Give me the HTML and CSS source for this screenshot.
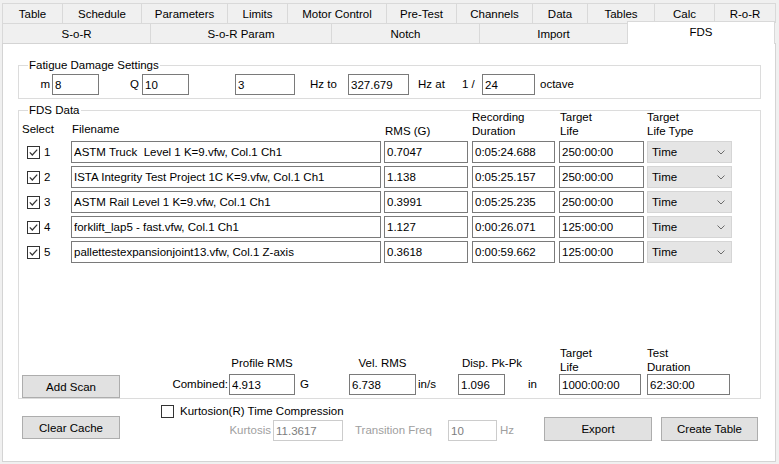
FILE: index.html
```html
<!DOCTYPE html>
<html>
<head>
<meta charset="utf-8">
<title>FDS</title>
<link rel="stylesheet" href="styles.css">
</head>
<body>
<div class="window">
  <div class="tabs">
    <div class="tab-row">
      <div class="tab first t-table">Table</div>
      <div class="tab t-schedule">Schedule</div>
      <div class="tab t-params">Parameters</div>
      <div class="tab t-limits">Limits</div>
      <div class="tab t-motor">Motor Control</div>
      <div class="tab t-pretest">Pre-Test</div>
      <div class="tab t-channels">Channels</div>
      <div class="tab t-data">Data</div>
      <div class="tab t-tables">Tables</div>
      <div class="tab t-calc">Calc</div>
      <div class="tab t-ror">R-o-R</div>
    </div>
    <div class="tab-row">
      <div class="tab first t-sor">S-o-R</div>
      <div class="tab t-sorparam">S-o-R Param</div>
      <div class="tab t-notch">Notch</div>
      <div class="tab t-import">Import</div>
      <div class="tab t-fds active">FDS</div>
    </div>
  </div>

  <div class="panel">
    <div class="group group-settings">
      <span class="group-title">Fatigue Damage Settings</span>
      <div class="settings-row">
        <span class="lbl lbl-m">m</span>
        <input class="input w-m" type="text" value="8" readonly>
        <span class="lbl lbl-q">Q</span>
        <input class="input w-q" type="text" value="10" readonly>
        <input class="input w-from" type="text" value="3" readonly>
        <span class="lbl lbl-hzto">Hz to</span>
        <input class="input w-to" type="text" value="327.679" readonly>
        <span class="lbl lbl-hzat">Hz at</span>
        <span class="lbl lbl-frac">1 /</span>
        <input class="input w-oct" type="text" value="24" readonly>
        <span class="lbl lbl-octave">octave</span>
      </div>
    </div>

    <div class="group group-data">
      <span class="group-title">FDS Data</span>
      <div class="data-head">
        <div class="col c-select hd-select">Select</div>
        <div class="col c-file hd-file">Filename</div>
        <div class="col c-rms hd-rms">RMS (G)</div>
        <div class="col c-rec hd-rec">Recording<br>Duration</div>
        <div class="col c-life hd-life">Target<br>Life</div>
        <div class="col c-type hd-type">Target<br>Life Type</div>
      </div>

      <div class="data-rows">
        <div class="data-row">
          <div class="col c-select sel">
            <svg class="check" width="13" height="13" viewBox="0 0 13 13"><rect x="0.5" y="0.5" width="12" height="12" fill="#fff" stroke="#333"/><path d="M2.8 6.4 L5.3 9 L10.2 3.6" fill="none" stroke="#333" stroke-width="1.2"/></svg>
            <span class="num">1</span>
          </div>
          <input class="input col c-file" type="text" value="ASTM Truck  Level 1 K=9.vfw, Col.1 Ch1" readonly>
          <input class="input col c-rms" type="text" value="0.7047" readonly>
          <input class="input col c-rec" type="text" value="0:05:24.688" readonly>
          <input class="input col c-life" type="text" value="250:00:00" readonly>
          <div class="combo col c-type"><span>Time</span><svg width="8" height="5" viewBox="0 0 8 5"><path d="M0.5 0.5 L4 4 L7.5 0.5" fill="none" stroke="#6b6b6b"/></svg></div>
        </div>
        <div class="data-row">
          <div class="col c-select sel">
            <svg class="check" width="13" height="13" viewBox="0 0 13 13"><rect x="0.5" y="0.5" width="12" height="12" fill="#fff" stroke="#333"/><path d="M2.8 6.4 L5.3 9 L10.2 3.6" fill="none" stroke="#333" stroke-width="1.2"/></svg>
            <span class="num">2</span>
          </div>
          <input class="input col c-file" type="text" value="ISTA Integrity Test Project 1C K=9.vfw, Col.1 Ch1" readonly>
          <input class="input col c-rms" type="text" value="1.138" readonly>
          <input class="input col c-rec" type="text" value="0:05:25.157" readonly>
          <input class="input col c-life" type="text" value="250:00:00" readonly>
          <div class="combo col c-type"><span>Time</span><svg width="8" height="5" viewBox="0 0 8 5"><path d="M0.5 0.5 L4 4 L7.5 0.5" fill="none" stroke="#6b6b6b"/></svg></div>
        </div>
        <div class="data-row">
          <div class="col c-select sel">
            <svg class="check" width="13" height="13" viewBox="0 0 13 13"><rect x="0.5" y="0.5" width="12" height="12" fill="#fff" stroke="#333"/><path d="M2.8 6.4 L5.3 9 L10.2 3.6" fill="none" stroke="#333" stroke-width="1.2"/></svg>
            <span class="num">3</span>
          </div>
          <input class="input col c-file" type="text" value="ASTM Rail Level 1 K=9.vfw, Col.1 Ch1" readonly>
          <input class="input col c-rms" type="text" value="0.3991" readonly>
          <input class="input col c-rec" type="text" value="0:05:25.235" readonly>
          <input class="input col c-life" type="text" value="250:00:00" readonly>
          <div class="combo col c-type"><span>Time</span><svg width="8" height="5" viewBox="0 0 8 5"><path d="M0.5 0.5 L4 4 L7.5 0.5" fill="none" stroke="#6b6b6b"/></svg></div>
        </div>
        <div class="data-row">
          <div class="col c-select sel">
            <svg class="check" width="13" height="13" viewBox="0 0 13 13"><rect x="0.5" y="0.5" width="12" height="12" fill="#fff" stroke="#333"/><path d="M2.8 6.4 L5.3 9 L10.2 3.6" fill="none" stroke="#333" stroke-width="1.2"/></svg>
            <span class="num">4</span>
          </div>
          <input class="input col c-file" type="text" value="forklift_lap5 - fast.vfw, Col.1 Ch1" readonly>
          <input class="input col c-rms" type="text" value="1.127" readonly>
          <input class="input col c-rec" type="text" value="0:00:26.071" readonly>
          <input class="input col c-life" type="text" value="125:00:00" readonly>
          <div class="combo col c-type"><span>Time</span><svg width="8" height="5" viewBox="0 0 8 5"><path d="M0.5 0.5 L4 4 L7.5 0.5" fill="none" stroke="#6b6b6b"/></svg></div>
        </div>
        <div class="data-row">
          <div class="col c-select sel">
            <svg class="check" width="13" height="13" viewBox="0 0 13 13"><rect x="0.5" y="0.5" width="12" height="12" fill="#fff" stroke="#333"/><path d="M2.8 6.4 L5.3 9 L10.2 3.6" fill="none" stroke="#333" stroke-width="1.2"/></svg>
            <span class="num">5</span>
          </div>
          <input class="input col c-file" type="text" value="pallettestexpansionjoint13.vfw, Col.1 Z-axis" readonly>
          <input class="input col c-rms" type="text" value="0.3618" readonly>
          <input class="input col c-rec" type="text" value="0:00:59.662" readonly>
          <input class="input col c-life" type="text" value="125:00:00" readonly>
          <div class="combo col c-type"><span>Time</span><svg width="8" height="5" viewBox="0 0 8 5"><path d="M0.5 0.5 L4 4 L7.5 0.5" fill="none" stroke="#6b6b6b"/></svg></div>
        </div>
      </div>

      <div class="summary">
        <button class="btn btn-add" type="button">Add Scan</button>
        <div class="summary-fields">
          <span class="lbl lbl-combined">Combined:</span>
          <div class="field">
            <div class="fhead one f-profile">Profile RMS</div>
            <div class="frow"><input class="input w-profile" type="text" value="4.913" readonly><span class="unit u-g">G</span></div>
          </div>
          <div class="field">
            <div class="fhead one f-vel">Vel. RMS</div>
            <div class="frow"><input class="input w-vel" type="text" value="6.738" readonly><span class="unit u-ins">in/s</span></div>
          </div>
          <div class="field">
            <div class="fhead one f-disp">Disp. Pk-Pk</div>
            <div class="frow"><input class="input w-disp" type="text" value="1.096" readonly><span class="unit u-in">in</span></div>
          </div>
          <div class="field f-gap">
            <div class="fhead two f-target">Target<br>Life</div>
            <div class="frow"><input class="input w-target" type="text" value="1000:00:00" readonly></div>
          </div>
          <div class="field">
            <div class="fhead two">Test<br>Duration</div>
            <div class="frow"><input class="input w-test" type="text" value="62:30:00" readonly></div>
          </div>
        </div>
      </div>
    </div>

    <div class="footer">
      <button class="btn btn-clear" type="button">Clear Cache</button>
      <div class="kurt">
        <div class="kurt-check">
          <svg width="13" height="13" viewBox="0 0 13 13"><rect x="0.5" y="0.5" width="12" height="12" fill="#fff" stroke="#333"/></svg>
          <span class="kurt-label">Kurtosion(R) Time Compression</span>
        </div>
        <div class="kurt-row">
          <span class="lbl dis lbl-kurtosis">Kurtosis</span>
          <input class="input dis-input w-kurt" type="text" value="11.3617" readonly>
          <span class="lbl dis lbl-trans">Transition Freq</span>
          <input class="input dis-input w-trans" type="text" value="10" readonly>
          <span class="lbl dis lbl-hz">Hz</span>
        </div>
      </div>
      <div class="actions">
        <button class="btn btn-export" type="button">Export</button>
        <button class="btn btn-create" type="button">Create Table</button>
      </div>
    </div>
  </div>
</div>
</body>
</html>
```

FILE: styles.css
```css
* { box-sizing: border-box; }

html, body {
  margin: 0;
  padding: 0;
}

body {
  width: 779px;
  height: 464px;
  overflow: hidden;
  background: #f0f0f0;
  color: #000;
  font-family: "Liberation Sans", Arial, sans-serif;
  font-size: 11.5px;
}

.window {
  padding: 3px 0 0 2px;
}

/* ---------- tabs ---------- */
.tab-row {
  display: flex;
  height: 20px;
}

.tab {
  height: 20px;
  line-height: 20px;
  text-align: center;
  white-space: nowrap;
  background: #f0f0f0;
  border-top: 1px solid #d9d9d9;
  border-right: 1px solid #d9d9d9;
}

.tab.first { border-left: 1px solid #d9d9d9; }

.t-table { width: 61px; }
.t-schedule { width: 79px; }
.t-params { width: 86px; }
.t-limits { width: 60px; }
.t-motor { width: 99px; }
.t-pretest { width: 70px; }
.t-channels { width: 76px; }
.t-data { width: 55px; }
.t-tables { width: 67px; }
.t-calc { width: 60px; }
.t-ror { width: 61px; }

.t-sor { width: 149px; }
.t-sorparam { width: 181px; }
.t-notch { width: 148px; }
.t-import { width: 148px; }
.t-fds { width: 148px; }

.tab.active {
  position: relative;
  z-index: 1;
  height: 23px;
  margin-top: -2px;
  line-height: 21px;
  background: #fff;
  border-left: 1px solid #d9d9d9;
  margin-left: -1px;
}

/* ---------- panel ---------- */
.panel {
  width: 774px;
  height: 419px;
  background: #fff;
  border: 1px solid #d4d4d4;
  display: flex;
  flex-direction: column;
}

.group {
  position: relative;
  border: 1px solid #dcdcdc;
  margin-left: 15px;
  width: 743px;
}

.group-title {
  position: absolute;
  top: -7px;
  left: 9px;
  padding: 0 1px;
  line-height: 13px;
  background: #fff;
  white-space: nowrap;
}

.group-settings {
  margin-top: 21px;
  height: 34px;
  padding-top: 8px;
}

.settings-row {
  display: flex;
  align-items: center;
  height: 21px;
}

.lbl {
  display: inline-block;
  white-space: nowrap;
  line-height: 21px;
  flex: none;
}

.lbl-m { width: 33px; text-align: right; padding-right: 2px; }
.lbl-q { width: 43px; text-align: right; padding-right: 3px; }
.lbl-hzto { width: 53px; padding-left: 15px; }
.lbl-hzat { width: 53px; padding-left: 9px; }
.lbl-frac { width: 20px; }
.lbl-octave { padding-left: 5px; }

.input {
  flex: none;
  display: block;
  height: 21px;
  margin: 0;
  padding: 0 2px;
  border: 1px solid #7a7a7a;
  border-radius: 0;
  background: #fff;
  color: #000;
  font: inherit;
  outline: none;
}

.w-m { width: 47px; }
.w-q { width: 47px; }
.w-from { width: 60px; margin-left: 46px; }
.w-to { width: 61px; }
.w-oct { width: 53px; }

/* ---------- FDS data ---------- */
.group-data {
  margin-top: 11px;
  height: 289px;
  display: flex;
  flex-direction: column;
}

.data-head {
  display: flex;
  align-items: flex-end;
  height: 28px;
  margin-top: -1px;
  line-height: 14px;
}

.col { flex: none; }
.c-select { width: 52px; }
.c-file { width: 310px; margin-right: 3px; }
.c-rms { width: 84px; margin-right: 4px; }
.c-rec { width: 83px; margin-right: 4px; }
.c-life { width: 85px; margin-right: 3px; }
.c-type { width: 85px; }

.hd-select { padding-left: 3px; margin-bottom: 2px; }
.hd-file { padding-left: 1px; margin-bottom: 2px; }
.hd-rms { padding-left: 1px; }
.hd-life { padding-left: 1px; }

.data-rows {
  display: flex;
  flex-direction: column;
  gap: 3px;
  margin-top: 3px;
}

.data-row {
  display: flex;
  align-items: center;
  height: 22px;
}

.data-row .input { height: 22px; }

.sel {
  display: flex;
  align-items: center;
  padding-left: 8px;
}

.check { display: block; flex: none; }

.num { margin-left: 4px; }

.combo {
  height: 22px;
  display: flex;
  align-items: center;
  justify-content: space-between;
  padding: 0 6px 0 4px;
  background: #e5e5e5;
  border: 1px solid #d5d5d5;
}

.combo svg { display: block; }

/* summary */
.summary {
  margin-top: auto;
  display: flex;
  align-items: flex-end;
}

.btn {
  display: block;
  flex: none;
  margin: 0;
  padding: 0;
  font: inherit;
  color: #000;
  background: #e1e1e1;
  border: 1px solid #adadad;
  border-radius: 0;
  text-align: center;
}

.btn-add {
  width: 98px;
  height: 23px;
  margin-left: 3px;
}

.summary-fields {
  display: flex;
  align-items: flex-end;
  margin-bottom: 3px;
}

.lbl-combined {
  width: 109px;
  text-align: right;
  padding-right: 1px;
}

.field {
  display: flex;
  flex-direction: column;
}

.fhead {
  line-height: 14px;
  white-space: nowrap;
}

.fhead.one { margin-bottom: 4px; }

.f-profile { width: 66px; text-align: center; }
.f-vel { width: 67px; text-align: center; }
.f-disp { padding-left: 4px; }
.f-target { padding-left: 1px; }

.frow {
  display: flex;
  align-items: center;
}

.unit {
  flex: none;
  line-height: 21px;
  white-space: nowrap;
}

.u-g { width: 54px; padding-left: 5px; }
.u-ins { width: 42px; padding-left: 2px; }
.u-in { width: 54px; padding-left: 23px; }

.w-profile { width: 66px; }
.w-vel { width: 67px; }
.w-disp { width: 47px; }
.w-target { width: 82px; }
.w-test { width: 83px; }

.f-gap { margin-right: 6px; }

/* ---------- footer ---------- */
.footer {
  display: flex;
  align-items: flex-start;
}

.btn-clear {
  width: 98px;
  height: 23px;
  margin-left: 19px;
  margin-top: 17px;
}

.kurt {
  margin-left: 41px;
  margin-top: 6px;
}

.kurt-check {
  display: flex;
  align-items: center;
  height: 13px;
}

.kurt-check svg { display: block; flex: none; }

.kurt-label {
  margin-left: 6px;
  white-space: nowrap;
  line-height: 13px;
}

.kurt-row {
  display: flex;
  align-items: center;
  margin-top: 2px;
}

.dis { color: #a0a0a0; }

.dis-input {
  border-color: #cccccc;
  color: #7d7d7d;
}

.lbl-kurtosis { width: 112px; text-align: right; padding-right: 2px; }
.lbl-trans { width: 105px; padding-left: 12px; }
.lbl-hz { padding-left: 3px; }

.w-kurt { width: 70px; }
.w-trans { width: 49px; }

.actions {
  display: flex;
  gap: 9px;
  margin-left: auto;
  margin-right: 17px;
  margin-top: 18px;
}

.btn-export { width: 108px; height: 24px; }
.btn-create { width: 97px; height: 24px; }
```
